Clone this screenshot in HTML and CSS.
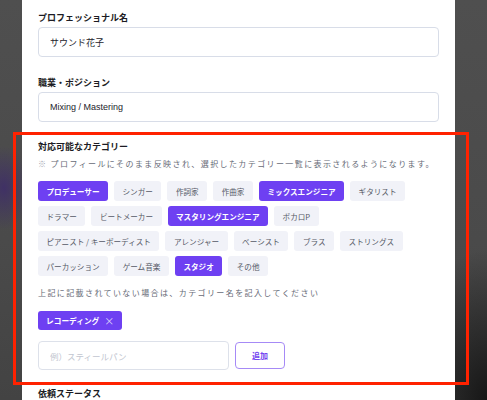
FILE: index.html
```html
<!DOCTYPE html>
<html lang="ja">
<head>
<meta charset="utf-8">
<title>プロフィール編集</title>
<link rel="stylesheet" href="styles.css">
</head>
<body>
<div class="modal">
  <div class="field">
    <label class="label">プロフェッショナル名</label>
    <input class="input" type="text" value="サウンド花子">
  </div>
  <div class="field">
    <label class="label">職業・ポジション</label>
    <input class="input" type="text" value="Mixing / Mastering">
  </div>

  <section class="cat">
    <h3 class="label">対応可能なカテゴリー</h3>
    <p class="note"><span class="mark">※</span> プロフィールにそのまま反映され、選択したカテゴリー一覧に表示されるようになります。</p>
    <div class="chips">
      <span class="chip on">プロデューサー</span>
      <span class="chip">シンガー</span>
      <span class="chip">作詞家</span>
      <span class="chip">作曲家</span>
      <span class="chip on">ミックスエンジニア</span>
      <span class="chip">ギタリスト</span>
      <span class="chip">ドラマー</span>
      <span class="chip">ビートメーカー</span>
      <span class="chip on">マスタリングエンジニア</span>
      <span class="chip">ボカロP</span>
      <span class="chip">ピアニスト / キーボーディスト</span>
      <span class="chip">アレンジャー</span>
      <span class="chip">ベーシスト</span>
      <span class="chip">ブラス</span>
      <span class="chip">ストリングス</span>
      <span class="chip">パーカッション</span>
      <span class="chip">ゲーム音楽</span>
      <span class="chip on">スタジオ</span>
      <span class="chip">その他</span>
    </div>
    <p class="note2">上記に記載されていない場合は、カテゴリー名を記入してください</p>
    <div class="tags">
      <span class="tag">レコーディング<span class="x">×</span></span>
    </div>
    <div class="add-row">
      <input class="add-input" type="text" placeholder="例）スティールパン">
      <button class="add-btn" type="button">追加</button>
    </div>
  </section>

  <h3 class="label next">依頼ステータス</h3>
</div>
</body>
</html>
```

FILE: styles.css
```css
* { box-sizing: border-box; }

html, body {
  margin: 0;
  height: 100%;
  overflow: hidden;
}

body {
  font-family: "Noto Sans CJK JP", sans-serif;
  background:
    radial-gradient(ellipse 26px 42px at 4px 188px, rgba(60, 40, 110, 0.75), rgba(60, 40, 110, 0) 100%),
    radial-gradient(ellipse 90px 150px at 487px 400px, rgba(20, 20, 20, 0.95), rgba(20, 20, 20, 0) 100%),
    linear-gradient(180deg, #4f4f4f 0%, #4a4a4a 60%, #434343 100%);
}

.modal {
  margin-left: 22px;
  width: 433px;
  min-height: 100%;
  background: #ffffff;
  padding: 11px 16px 0 16px;
}

.label {
  display: block;
  margin: 0 0 2px 0;
  font-size: 9px;
  line-height: 14px;
  font-weight: 700;
  color: #1c1c24;
}

.field { margin-bottom: 19px; }
.field + .field { margin-bottom: 18px; }

.input {
  display: block;
  width: 100%;
  height: 30px;
  margin: 0;
  padding: 0 11px;
  border: 1px solid #d8dde8;
  border-radius: 4px;
  background: #fff;
  font-family: "Liberation Sans", "Noto Sans CJK JP", sans-serif;
  font-size: 9px;
  color: #24242c;
  outline: none;
}

.cat {
  position: relative;
}

.cat::before {
  content: "";
  position: absolute;
  top: -8px;
  left: -25px;
  right: -30px;
  bottom: -15px;
  border: 3px solid #ff2200;
  pointer-events: none;
}

.cat .label { margin-bottom: 3px; }

.note, .note2 {
  margin: 0;
  font-size: 8px;
  line-height: 14px;
  letter-spacing: 1.4px;
  color: #676b77;
  white-space: nowrap;
}

.note .mark { color: #a0a4ae; }

.chips {
  margin-top: 10px;
  display: flex;
  flex-wrap: wrap;
  column-gap: 6px;
  row-gap: 5px;
}

.chip {
  display: inline-flex;
  align-items: center;
  height: 20px;
  padding: 0 8.5px;
  border-radius: 3px;
  background: #f1f2f8;
  color: #555966;
  font-size: 7.6px;
  white-space: nowrap;
}

.chip.on {
  background: #6e40f2;
  color: #ffffff;
  font-weight: 700;
}

.note2 { margin-top: 10px; }

.tags {
  margin-top: 11px;
  display: flex;
}

.tag {
  display: inline-flex;
  align-items: center;
  height: 19px;
  padding: 0 8px;
  border-radius: 3px;
  background: #6e40f2;
  color: #ffffff;
  font-size: 7.7px;
  font-weight: 700;
}

.tag .x {
  margin-left: 5px;
  font-size: 10px;
  font-weight: 400;
  color: rgba(255, 255, 255, 0.75);
  line-height: 1;
}

.add-row {
  margin-top: 11px;
  display: flex;
  align-items: center;
  gap: 6px;
}

.add-input {
  width: 191px;
  height: 29px;
  margin: 0;
  padding: 0 11px;
  border: 1px solid #dde1ea;
  border-radius: 4px;
  font-family: "Noto Sans CJK JP", sans-serif;
  font-size: 8.5px;
  outline: none;
}

.add-input::placeholder { color: #c2c6d0; }

.add-btn {
  width: 50px;
  height: 27px;
  margin: 0;
  padding: 0;
  border: 1px solid #a68af6;
  border-radius: 4px;
  background: #ffffff;
  color: #7446f0;
  font-family: "Noto Sans CJK JP", sans-serif;
  font-size: 8px;
  font-weight: 700;
}

.label.next { margin-top: 17px; }
```
